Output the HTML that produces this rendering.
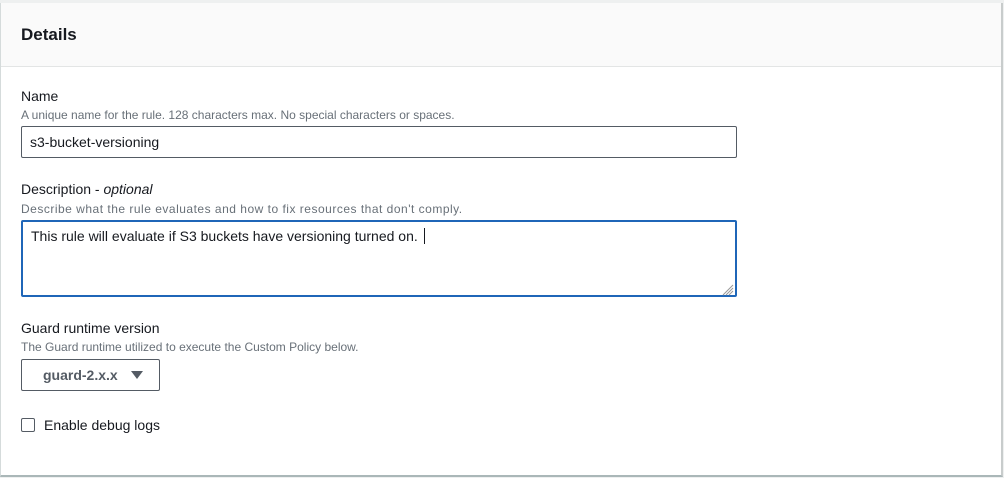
<!DOCTYPE html>
<html><head><style>
body{margin:0;width:1004px;height:478px;background:#eef0f0;font-family:"Liberation Sans",sans-serif;color:#16191f;position:relative;overflow:hidden}
.card{position:absolute;left:0;top:3px;width:1000px;height:472px;background:#fff;border-right:2px solid #c8cccc;border-bottom:2px solid #aab7b8;border-left:1px solid #d5dbdb}
.hdr{position:absolute;left:0;top:0;right:0;height:63px;background:#fafafa;border-bottom:1px solid #e3e5e5}
.t{position:absolute;white-space:nowrap}
.lbl{font-size:14px}
.hint{font-size:12px;color:#687078}
.box{position:absolute;border:1px solid #545b64;border-radius:2px;background:#fff}
</style></head><body>
<div class="card">
<div class="hdr"></div>
<div class="t" style="left:20px;top:22px;font-size:17px;font-weight:bold">Details</div>
<div class="t lbl" style="left:20px;top:85px">Name</div>
<div class="t hint" style="left:20px;top:105px">A unique name for the rule. 128 characters max. No special characters or spaces.</div>
<div class="box" style="left:20px;top:123px;width:714px;height:30px"></div>
<div class="t lbl" style="left:29px;top:131px">s3-bucket-versioning</div>
<div class="t lbl" style="left:20px;top:178px">Description - <i>optional</i></div>
<div class="t hint" style="left:20px;top:199px;letter-spacing:0.5px">Describe what the rule evaluates and how to fix resources that don't comply.</div>
<div class="box" style="left:20px;top:217px;width:712px;height:73px;border:2px solid #1f66b8"></div>
<div class="t lbl" style="left:30px;top:225px">This rule will evaluate if S3 buckets have versioning turned on.&nbsp;<span style="border-left:1px solid #16191f;margin-left:2px"> </span></div>
<svg class="t" style="left:721px;top:281px" width="12" height="12"><path d="M1 11L11 1M4 11L11 4M7 11L11 7" stroke="#999" stroke-width="1"/></svg>
<div class="t lbl" style="left:20px;top:317px">Guard runtime version</div>
<div class="t hint" style="left:20px;top:337px">The Guard runtime utilized to execute the Custom Policy below.</div>
<div class="box" style="left:20px;top:356px;width:137px;height:30px"></div>
<div class="t lbl" style="left:42px;top:364px;font-weight:bold;color:#545b64">guard-2.x.x</div>
<svg class="t" style="left:130px;top:367px" width="12" height="10"><path d="M0 1H12L6 9Z" fill="#545b64"/></svg>
<div class="box" style="left:20px;top:415px;width:12px;height:12px;border-radius:2px"></div>
<div class="t lbl" style="left:43px;top:414px">Enable debug logs</div>
</div>
</body></html>
